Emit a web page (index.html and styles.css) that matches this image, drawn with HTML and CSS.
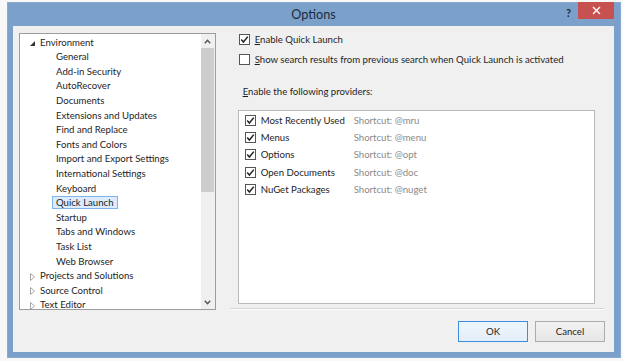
FILE: index.html
```html
<!DOCTYPE html>
<html>
<head>
<title>Options</title>
<link rel="stylesheet" href="styles.css">
</head>
<body>

<div class="dlg_window">
	<div class="dlg_titlebar">
		<span></span>
		<span class="dlg_title">Options</span>
		<div class="dlg_sysbtns">
			<span class="dlg_help">?</span>
			<span class="dlg_close">
				<svg width="9" height="9" viewBox="0 0 9 9"><path d="M1 1L8 8M8 1L1 8" stroke="#fff" stroke-width="1.4"/></svg>
			</span>
		</div>
	</div>

	<div class="dlg_client">
		<div class="tree_box">
			<div class="tree_list">
				<div class="tree_row top_row">
					<span class="expander"><svg width="7" height="7" viewBox="0 0 7 7"><polygon points="6,1 6,6 1,6" fill="#333"/></svg></span>Environment
				</div>
				<div class="tree_row child_row">General</div>
				<div class="tree_row child_row">Add-in Security</div>
				<div class="tree_row child_row">AutoRecover</div>
				<div class="tree_row child_row">Documents</div>
				<div class="tree_row child_row">Extensions and Updates</div>
				<div class="tree_row child_row">Find and Replace</div>
				<div class="tree_row child_row">Fonts and Colors</div>
				<div class="tree_row child_row">Import and Export Settings</div>
				<div class="tree_row child_row">International Settings</div>
				<div class="tree_row child_row">Keyboard</div>
				<div class="tree_row child_row"><span class="tree_selected">Quick Launch</span></div>
				<div class="tree_row child_row">Startup</div>
				<div class="tree_row child_row">Tabs and Windows</div>
				<div class="tree_row child_row">Task List</div>
				<div class="tree_row child_row">Web Browser</div>
				<div class="tree_row top_row">
					<span class="expander"><svg width="7" height="8" viewBox="0 0 7 8"><polygon points="1.5,0.5 5.5,4 1.5,7.5" fill="none" stroke="#a6a6a6"/></svg></span>Projects and Solutions
				</div>
				<div class="tree_row top_row">
					<span class="expander"><svg width="7" height="8" viewBox="0 0 7 8"><polygon points="1.5,0.5 5.5,4 1.5,7.5" fill="none" stroke="#a6a6a6"/></svg></span>Source Control
				</div>
				<div class="tree_row top_row">
					<span class="expander"><svg width="7" height="8" viewBox="0 0 7 8"><polygon points="1.5,0.5 5.5,4 1.5,7.5" fill="none" stroke="#a6a6a6"/></svg></span>Text Editor
				</div>
			</div>
			<div class="vscroll">
				<div class="vscroll_arrow">
					<svg width="7" height="5" viewBox="0 0 7 5"><polyline points="0.8,4.2 3.5,1.3 6.2,4.2" fill="none" stroke="#555" stroke-width="1.5"/></svg>
				</div>
				<div class="vscroll_thumb"></div>
				<div class="vscroll_track"></div>
				<div class="vscroll_arrow">
					<svg width="7" height="5" viewBox="0 0 7 5"><polyline points="0.8,0.8 3.5,3.7 6.2,0.8" fill="none" stroke="#555" stroke-width="1.5"/></svg>
				</div>
			</div>
		</div>

		<div class="page_panel">
			<div class="check_row" id="enable_row">
				<span class="check_box checked"><svg width="9" height="9" viewBox="0 0 9 9"><polyline points="1.2,4.6 3.4,7 7.8,1.6" fill="none" stroke="#222" stroke-width="1.5"/></svg></span>
				<span><u>E</u>nable Quick Launch</span>
			</div>
			<div class="check_row" id="show_row">
				<span class="check_box"></span>
				<span><u>S</u>how search results from previous search when Quick Launch is activated</span>
			</div>
			<div class="providers_label"><u>E</u>nable the following providers:</div>
			<div class="providers_box">
				<div class="provider_row">
					<span class="check_box checked"><svg width="9" height="9" viewBox="0 0 9 9"><polyline points="1.2,4.6 3.4,7 7.8,1.6" fill="none" stroke="#222" stroke-width="1.5"/></svg></span>
					<span class="provider_name">Most Recently Used</span>
					<span class="provider_key">Shortcut: @mru</span>
				</div>
				<div class="provider_row">
					<span class="check_box checked"><svg width="9" height="9" viewBox="0 0 9 9"><polyline points="1.2,4.6 3.4,7 7.8,1.6" fill="none" stroke="#222" stroke-width="1.5"/></svg></span>
					<span class="provider_name">Menus</span>
					<span class="provider_key">Shortcut: @menu</span>
				</div>
				<div class="provider_row">
					<span class="check_box checked"><svg width="9" height="9" viewBox="0 0 9 9"><polyline points="1.2,4.6 3.4,7 7.8,1.6" fill="none" stroke="#222" stroke-width="1.5"/></svg></span>
					<span class="provider_name">Options</span>
					<span class="provider_key">Shortcut: @opt</span>
				</div>
				<div class="provider_row">
					<span class="check_box checked"><svg width="9" height="9" viewBox="0 0 9 9"><polyline points="1.2,4.6 3.4,7 7.8,1.6" fill="none" stroke="#222" stroke-width="1.5"/></svg></span>
					<span class="provider_name">Open Documents</span>
					<span class="provider_key">Shortcut: @doc</span>
				</div>
				<div class="provider_row">
					<span class="check_box checked"><svg width="9" height="9" viewBox="0 0 9 9"><polyline points="1.2,4.6 3.4,7 7.8,1.6" fill="none" stroke="#222" stroke-width="1.5"/></svg></span>
					<span class="provider_name">NuGet Packages</span>
					<span class="provider_key">Shortcut: @nuget</span>
				</div>
			</div>
			<div class="separator"></div>
			<div class="button_bar">
				<button class="dlg_btn default_btn">OK</button>
				<button class="dlg_btn">Cancel</button>
			</div>
		</div>
	</div>
</div>

</body>
</html>
```

FILE: styles.css
```css
	body
	{
		margin : 0px;
		background-color : #f8f8f8;
		font-family : Lato, "Liberation Sans", sans-serif;
		font-size : 9.6px;
		color : #1e1e1e;
	}
	.dlg_window
	{
		margin : 2px 0px 0px 7px;
		width : 614px;
		height : 356px;
		box-sizing : border-box;
		padding : 0px 6px 5px 5px;
		background-color : #7ba1cb;
		border : 1px solid #8aaacf;
		display : flex;
		flex-direction : column;
	}
	.dlg_titlebar
	{
		height : 23px;
		display : grid;
		grid-template-columns : 1fr auto 1fr;
		align-items : start;
	}
	.dlg_title
	{
		padding-top : 4px;
		font-size : 12.6px;
		color : #1a2a3c;
	}
	.dlg_sysbtns
	{
		display : flex;
		justify-content : flex-end;
		align-items : flex-start;
	}
	.dlg_help
	{
		margin : 3px 7px 0px 0px;
		font-size : 11px;
		font-weight : bold;
		color : #1e2d40;
	}
	.dlg_close
	{
		width : 36px;
		height : 17px;
		margin-top : -1px;
		background-color : #c75050;
		display : flex;
		align-items : center;
		justify-content : center;
	}
	.dlg_client
	{
		flex : 1;
		background-color : #f0f0f0;
		display : flex;
		padding : 7px 9px 0px 6px;
		gap : 14px;
	}

	/* left tree */
	.tree_box
	{
		width : 197px;
		height : 277px;
		box-sizing : border-box;
		border : 1px solid #9c9c9c;
		background-color : #fff;
		display : flex;
		overflow : hidden;
	}
	.tree_list
	{
		flex : 1;
		padding-top : 1.6px;
		overflow : hidden;
	}
	.tree_row
	{
		height : 14.6px;
		line-height : 14.6px;
		white-space : nowrap;
	}
	.top_row
	{
		padding-left : 9px;
	}
	.child_row
	{
		padding-left : 36px;
	}
	.expander
	{
		display : inline-block;
		width : 11px;
		vertical-align : middle;
		line-height : 0px;
	}
	.tree_selected
	{
		margin-left : -4px;
		padding : 0px 3px;
		background-color : #dcecfc;
		border : 1px solid #7eb4ea;
	}
	.vscroll
	{
		width : 14px;
		background-color : #f0f0f0;
		display : flex;
		flex-direction : column;
	}
	.vscroll_arrow
	{
		height : 14px;
		display : flex;
		align-items : center;
		justify-content : center;
	}
	.vscroll_thumb
	{
		height : 144px;
		margin : 0px 1px 0px 0px;
		background-color : #cdcdcd;
	}
	.vscroll_track
	{
		flex : 1;
	}

	/* right page */
	.page_panel
	{
		width : 376px;
		display : flex;
		flex-direction : column;
	}
	.check_row
	{
		height : 13px;
		padding-left : 9px;
		display : flex;
		align-items : center;
		gap : 5px;
	}
	#show_row
	{
		margin-top : 7px;
	}
	.check_box
	{
		width : 11px;
		height : 11px;
		box-sizing : border-box;
		border : 1px solid #555;
		background-color : #fff;
		display : flex;
		align-items : center;
		justify-content : center;
		flex-shrink : 0;
	}
	.providers_label
	{
		margin-top : 19px;
		padding-left : 13px;
		height : 13px;
		line-height : 13px;
	}
	.providers_box
	{
		margin : 12px 10px 0px 8px;
		height : 194px;
		box-sizing : border-box;
		border : 1px solid #bababa;
		background-color : #fff;
		padding : 1px 0px 0px 6px;
	}
	.provider_row
	{
		height : 17.2px;
		display : flex;
		align-items : center;
	}
	.provider_name
	{
		width : 93px;
		margin-left : 5px;
		white-space : nowrap;
	}
	.provider_key
	{
		color : #8a8a8a;
	}
	.separator
	{
		margin-top : 4px;
		border-top : 1px solid #d3d3d3;
		border-bottom : 1px solid #fff;
		margin-right : 1px;
	}
	.button_bar
	{
		margin-top : 11px;
		display : flex;
		justify-content : flex-end;
		gap : 7px;
	}
	.dlg_btn
	{
		width : 70px;
		height : 21px;
		font-family : Lato, "Liberation Sans", sans-serif;
		font-size : 9.6px;
		color : #1e1e1e;
		border : 1px solid #adadad;
		background : linear-gradient(#f2f2f2, #e6e6e6);
		padding : 0px;
	}
	.default_btn
	{
		border-color : #3c8fe0;
		background : linear-gradient(#eef5fc, #e4eef9);
	}
```
